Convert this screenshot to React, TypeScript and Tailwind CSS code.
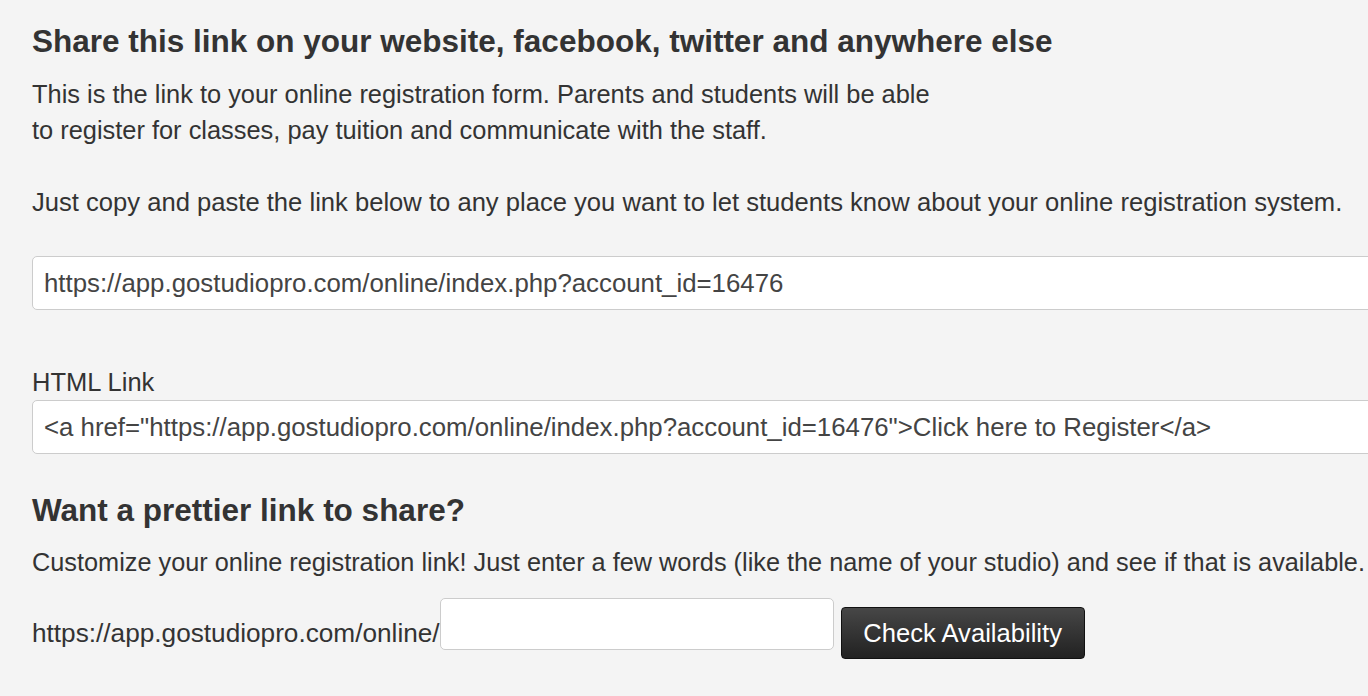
const font = { fontFamily: '"Liberation Sans", Arial, sans-serif' };

export default function App() {
  const link = "https://app.gostudiopro.com/online/index.php?account_id=16476";

  return (
    <div className="h-[696px] w-full overflow-hidden bg-[#f4f4f4] text-[#333333]" style={font}>
      <div className="pl-[32px]">
        <h2 className="pt-[24px] text-[31.5px] font-bold leading-[34px] whitespace-nowrap">
          Share this link on your website, facebook, twitter and anywhere else
        </h2>
        <p className="mt-[18px] text-[25.4px] leading-[36px] whitespace-nowrap">
          This is the link to your online registration form. Parents and students will be able
          <br />
          to register for classes, pay tuition and communicate with the staff.
          <br />
          <br />
          <span className="text-[25.6px]">
            Just copy and paste the link below to any place you want to let students know about your online registration system.
          </span>
        </p>

        <input
          readOnly
          value={link}
          className="mt-[36px] block h-[54px] w-[1400px] rounded-[5px] border border-[#cccccc] bg-white px-[11px] text-[25.8px] text-[#444444] outline-none"
        />

        <label className="mt-[54px] block text-[25.5px] leading-[36px]">HTML Link</label>
        <input
          readOnly
          value={`<a href="${link}">Click here to Register</a>`}
          className="block h-[54px] w-[1400px] rounded-[5px] border border-[#cccccc] bg-white px-[11px] text-[25.8px] text-[#444444] outline-none"
        />

        <h2 className="mt-[39px] text-[31.5px] font-bold leading-[34px]">Want a prettier link to share?</h2>
        <p className="mt-[17px] text-[25.3px] leading-[36px] whitespace-nowrap">
          Customize your online registration link! Just enter a few words (like the name of your studio) and see if that is available.
        </p>

        <div className="mt-[18px] flex items-start">
          <span className="mt-[17px] text-[26.2px] leading-[36px] whitespace-nowrap">https://app.gostudiopro.com/online/</span>
          <input className="h-[52px] w-[394px] rounded-[5px] border border-[#cccccc] bg-white px-[11px] text-[25px] outline-none" />
          <button className="ml-[7px] mt-[9px] h-[52px] w-[244px] rounded-[4px] border border-[#111111] bg-gradient-to-b from-[#474747] to-[#222222] text-[25.6px] text-white">
            Check Availability
          </button>
        </div>
      </div>
    </div>
  );
}
